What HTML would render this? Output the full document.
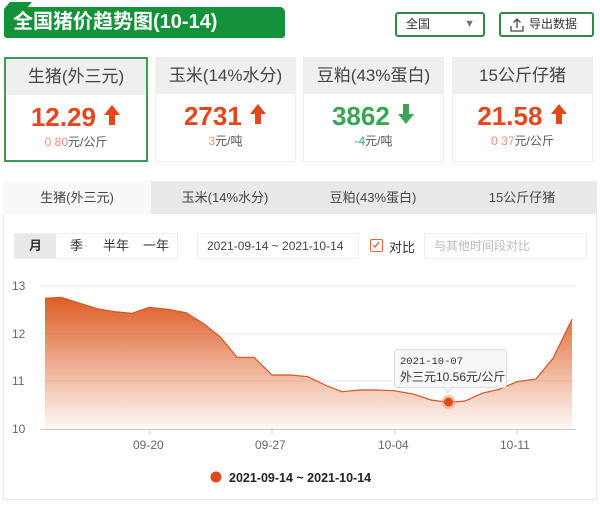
<!DOCTYPE html>
<html><head><meta charset="utf-8"><style>
*{margin:0;padding:0;box-sizing:border-box}
body{width:600px;height:506px;background:#fff;font-family:"Liberation Sans","Noto Sans CJK SC",sans-serif;position:relative;overflow:hidden;color:#333}
.a{position:absolute}
.title{left:4px;top:7px;width:281px;height:31px;background:#14923a;border-radius:3px 5px 3px 3px;color:#fff;font-weight:bold;font-size:20px;line-height:30px;padding-left:9px}
.notch{left:4px;top:2px;width:22px;height:7px;background:#14923a;transform:skewX(-40deg);transform-origin:bottom left}
.sel{left:395px;top:12px;width:90px;height:25px;border:2px solid #2f8a4a;border-radius:3px;font-size:12px;line-height:21px;padding-left:9px;color:#333}
.btn{left:499px;top:12px;width:95px;height:25px;border:2px solid #2f8a4a;border-radius:3px;font-size:12px;line-height:21px;padding-left:28px;color:#333}
.card{top:57px;height:105px;border:1px solid #eee;text-align:center}
.card .h{height:36px;background:#efefef;font-size:17px;line-height:36px;color:#444}
.card .v{font-size:26px;font-weight:bold;line-height:36px;margin-top:4px}
.card .s{font-size:12px;color:#555;line-height:14px;margin-top:0}
.red{color:#e5461c}.grn{color:#3aa655}
.tabs{left:3px;top:181px;width:594px;height:33px;background:#e9e9e9}
.tab{top:181px;height:33px;font-size:13px;line-height:33px;text-align:center;color:#444}
.panel{left:3px;top:214px;width:594px;height:286px;border:1px solid #e6e6e6;border-top:none}
</style></head><body>
<div class="a notch"></div>
<div class="a title">全国猪价趋势图(10-14)</div>
<div class="a sel">全国<span style="position:absolute;right:8px;top:0;color:#777;font-size:11px">▼</span></div>
<div class="a btn"><svg class="a" style="left:8px;top:3px" width="16" height="16" viewBox="0 0 16 16" fill="none" stroke="#444" stroke-width="1.3"><path d="M8 2v9M4.5 5.5L8 2l3.5 3.5M2 9v5h12V9"/></svg>导出数据</div>

<div class="a card" style="left:4px;width:144px;border:2px solid #3d9b52"><div class="h">生猪(外三元)</div><div class="v red">12.29 <svg width="18" height="22" viewBox="0 0 18 22"><path d="M9 1L17 11H12V21H6V11H1Z" fill="#e5461c"/></svg></div><div class="s"><span class="red" style="opacity:.6">0 80</span>元/公斤</div></div>
<div class="a card" style="left:155px;width:141px"><div class="h">玉米(14%水分)</div><div class="v red">2731 <svg width="18" height="22" viewBox="0 0 18 22"><path d="M9 1L17 11H12V21H6V11H1Z" fill="#e5461c"/></svg></div><div class="s"><span class="red" style="opacity:.6">3</span>元/吨</div></div>
<div class="a card" style="left:303px;width:141px"><div class="h">豆粕(43%蛋白)</div><div class="v grn">3862 <svg width="18" height="22" viewBox="0 0 18 22"><path d="M9 21L17 11H12V1H6V11H1Z" fill="#3aa655"/></svg></div><div class="s"><span class="grn">-4</span>元/吨</div></div>
<div class="a card" style="left:452px;width:141px"><div class="h">15公斤仔猪</div><div class="v red">21.58 <svg width="18" height="22" viewBox="0 0 18 22"><path d="M9 1L17 11H12V21H6V11H1Z" fill="#e5461c"/></svg></div><div class="s"><span class="red" style="opacity:.6">0 37</span>元/公斤</div></div>

<div class="a tabs"></div>
<div class="a tab" style="left:3px;width:148px;background:#f8f8f8">生猪(外三元)</div>
<div class="a tab" style="left:151px;width:148px">玉米(14%水分)</div>
<div class="a tab" style="left:299px;width:148px">豆粕(43%蛋白)</div>
<div class="a tab" style="left:447px;width:150px">15公斤仔猪</div>
<div class="a panel"></div>

<div class="a" style="left:14px;top:233px;width:164px;height:26px;border:1px solid #eee;font-size:13px;line-height:24px">
<span class="a" style="left:0;top:0;width:41px;height:24px;background:#e8e8e8;text-align:center;font-weight:bold">月</span>
<span class="a" style="left:55px">季</span><span class="a" style="left:88px">半年</span><span class="a" style="left:128px">一年</span></div>
<div class="a" style="left:197px;top:233px;width:162px;height:26px;border:1px solid #eee;font-size:12px;line-height:24px;padding-left:9px;color:#444">2021-09-14 ~ 2021-10-14</div>
<div class="a" style="left:370px;top:239px;width:13px;height:13px;border:1.5px solid #e5663a;border-radius:2px"><svg width="10" height="10" style="position:absolute;left:0;top:0"><path d="M2 5l2 2 4-5" stroke="#e5663a" stroke-width="1.3" fill="none"/></svg></div>
<div class="a" style="left:389px;top:237px;font-size:13px">对比</div>
<div class="a" style="left:424px;top:233px;width:163px;height:26px;border:1px solid #eee;font-size:12px;line-height:24px;padding-left:9px;color:#bbb">与其他时间段对比</div>

<svg class="a" style="left:0;top:270px" width="600" height="236">
<defs><linearGradient id="g" gradientUnits="userSpaceOnUse" x1="0" y1="25" x2="0" y2="160"><stop offset="0" stop-color="#dd5a22"/><stop offset="1" stop-color="#dd5a22" stop-opacity="0.03"/></linearGradient></defs>
<g stroke="#e8e8e8" stroke-width="1"><line x1="40" y1="16" x2="576" y2="16"/><line x1="40" y1="64" x2="576" y2="64"/><line x1="40" y1="111" x2="576" y2="111"/><line x1="40" y1="159.5" x2="576" y2="159.5" stroke="#ccc"/></g>
<g font-size="12" fill="#666" font-family="Liberation Sans,sans-serif"><text x="12" y="20">13</text><text x="12" y="68">12</text><text x="12" y="115">11</text><text x="12" y="163">10</text>
<text x="133" y="179">09-20</text><text x="255" y="179">09-27</text><text x="378" y="179">10-04</text><text x="500" y="179">10-11</text></g>
<g stroke="#ccc"><line x1="150" y1="160" x2="150" y2="165"/><line x1="272" y1="160" x2="272" y2="165"/><line x1="395" y1="160" x2="395" y2="165"/><line x1="517" y1="160" x2="517" y2="165"/></g>
<path d="M45 28.3L61 27.3L80 33.3L98 39L115 41.7L132 43.3L149 37.3L168 39.3L186 42.7L203 53.3L220 66.7L237 87.3L254 87.3L272 105L291 105L308 106.7L325 115L342 121.7L360 120L377 120L394 120.7L413 124L431 130L448.5 132.3L465 131L482 123.3L499 119.3L517 111.7L536 109L553 88.3L572 49.3L572 160L45 160Z" fill="url(#g)"/>
<path d="M45 28.3L61 27.3L80 33.3L98 39L115 41.7L132 43.3L149 37.3L168 39.3L186 42.7L203 53.3L220 66.7L237 87.3L254 87.3L272 105L291 105L308 106.7L325 115L342 121.7L360 120L377 120L394 120.7L413 124L431 130L448.5 132.3L465 131L482 123.3L499 119.3L517 111.7L536 109L553 88.3L572 49.3" fill="none" stroke="#d9531e" stroke-width="1.2"/>
<rect x="394.5" y="79.5" width="112" height="38" rx="3" fill="#f7f7f7" stroke="#ddd"/>
<path d="M443 117.5l5 5 5-5" fill="#f7f7f7" stroke="#ddd"/>
<text x="400" y="94" font-size="10.5" fill="#333" font-family="Liberation Mono,monospace">2021-10-07</text>
<text x="400" y="111" font-size="12" fill="#333" font-family="Liberation Sans,Noto Sans CJK SC,sans-serif">外三元10.56元/公斤</text>
<circle cx="448.5" cy="132" r="7" fill="#f4a07a" opacity=".6"/><circle cx="448.5" cy="132" r="4.5" fill="#e04a18"/>
<circle cx="216" cy="207" r="5.5" fill="#e04a18"/>
<text x="229" y="212" font-size="12.5" font-weight="bold" fill="#222" font-family="Liberation Sans,sans-serif">2021-09-14 ~ 2021-10-14</text>
</svg>
</body></html>
